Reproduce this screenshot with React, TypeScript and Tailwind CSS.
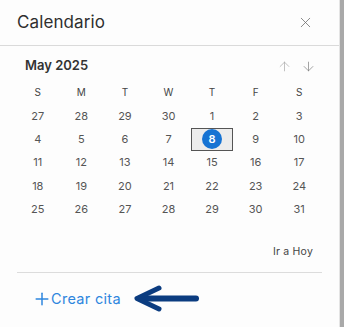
import React from "react";
import { X, ArrowUp, ArrowDown, Plus } from "lucide-react";

const weekdays = ["S", "M", "T", "W", "T", "F", "S"];

const weeks = [
  [27, 28, 29, 30, 1, 2, 3],
  [4, 5, 6, 7, 8, 9, 10],
  [11, 12, 13, 14, 15, 16, 17],
  [18, 19, 20, 21, 22, 23, 24],
  [25, 26, 27, 28, 29, 30, 31],
];

export default function App() {
  return (
    <div className="flex h-[327px] w-[344px] bg-white font-['Inter',sans-serif] text-[#333]">
      <div className="flex w-[340px] flex-col border-r border-[#e4e4e4] bg-[#fdfdfd]">
        {/* header */}
        <div className="flex h-[46px] shrink-0 items-center justify-between border-b border-[#dadada] pl-[17px] pr-[25px]">
          <span className="text-[17px] tracking-[0.1px] text-[#2f2f2f]">Calendario</span>
          <X size={17} strokeWidth={1.1} className="text-[#6b6b6b]" />
        </div>

        {/* month nav */}
        <div className="mt-[10px] flex h-[20px] items-center justify-between pl-[25px] pr-[23px]">
          <span className="text-[13px] font-semibold text-[#333]">May 2025</span>
          <div className="flex items-center gap-[9px]">
            <ArrowUp size={15} strokeWidth={1.1} className="text-[#a5a5a5]" />
            <ArrowDown size={15} strokeWidth={1.1} className="text-[#7a7a7a]" />
          </div>
        </div>

        {/* grid */}
        <div className="ml-[16px] mt-[5px] w-[305px]">
          <div className="grid h-[23.3px] grid-cols-7 items-center text-center text-[10px] text-[#444]">
            {weekdays.map((d, i) => (
              <span key={i}>{d}</span>
            ))}
          </div>
          {weeks.map((w, wi) => (
            <div key={wi} className="grid h-[23.3px] grid-cols-7 items-center text-center text-[11px] text-[#555]">
              {w.map((d, di) =>
                wi === 1 && di === 4 ? (
                  <div key={di} className="mx-[0.5px] flex h-[23px] items-center justify-center border border-[#555] bg-[#ececec]">
                    <span className="flex h-[20px] w-[20px] items-center justify-center rounded-full bg-[#1673d3] text-[11px] font-semibold text-white">
                      {d}
                    </span>
                  </div>
                ) : (
                  <span key={di}>{d}</span>
                )
              )}
            </div>
          ))}
        </div>

        {/* today link */}
        <div className="mt-[23px] flex justify-end pr-[26px]">
          <span className="text-[10.5px] tracking-[0.2px] text-[#444]">Ir a Hoy</span>
        </div>

        <div className="mx-[17px] mt-[12px] border-t border-[#dcdcdc]" />

        {/* footer */}
        <div className="mt-[11px] flex items-center pl-[32px]">
          <Plus size={20} strokeWidth={1.8} className="text-[#2e86de]" />
          <span className="ml-[-1px] text-[14.5px] tracking-[0.3px] text-[#2e86de]">Crear cita</span>
          <svg width="72" height="30" viewBox="0 0 72 30" className="ml-[11px]" fill="none">
            <path d="M8 14.5 H64" stroke="#0b3c80" strokeWidth="6" strokeLinecap="round" />
            <path d="M27 4 L5 14.5 L27 25" stroke="#0b3c80" strokeWidth="5" strokeLinecap="round" strokeLinejoin="round" />
          </svg>
        </div>
      </div>
      <div className="w-[4px] bg-[#a9a9a9]" />
    </div>
  );
}
